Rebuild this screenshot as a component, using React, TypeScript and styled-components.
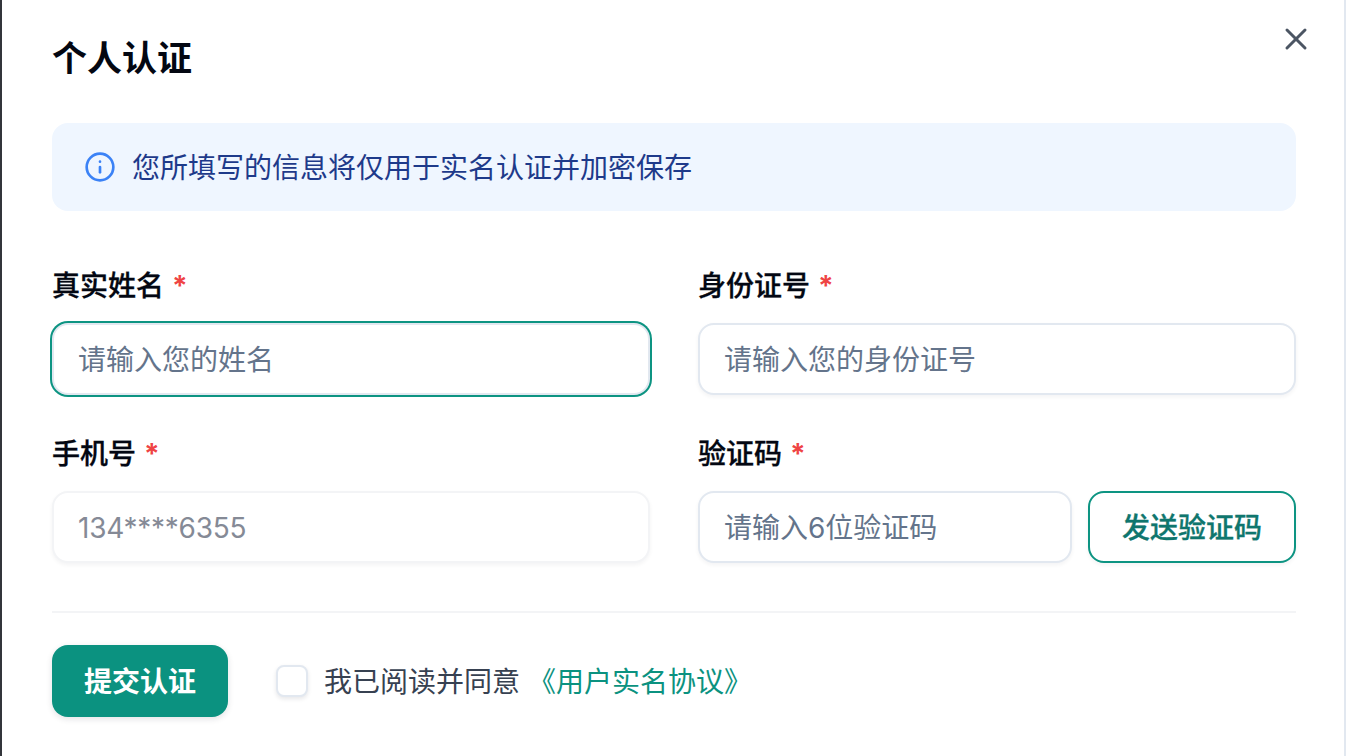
import React from "react";
import styled, { createGlobalStyle } from "styled-components";
import { X, Info } from "lucide-react";

const Global = createGlobalStyle`
  * { box-sizing: border-box; }
  html, body { margin: 0; padding: 0; height: 100%; overflow: hidden; background: #e2e8f0; }
  body { font-family: Inter, "Noto Sans CJK SC", sans-serif; }
`;

const Backdrop = styled.div`
  width: 1346px;
  height: 756px;
  padding-right: 2px;
  background: #e2e8f0;
  border-left: 2px solid #33353b;
`;

const Modal = styled.div`
  position: relative;
  width: 1342px;
  height: 756px;
  background: #ffffff;
  padding: 0 48px 0 50px;
  display: flex;
  flex-direction: column;
`;

const Title = styled.h1`
  margin: 35px 0 0;
  height: 46px;
  line-height: 46px;
  font-size: 35px;
  font-weight: 700;
  color: #030712;
`;

const Close = styled.button`
  position: absolute;
  top: 19px;
  right: 28px;
  width: 40px;
  height: 40px;
  padding: 0;
  border: none;
  background: none;
  color: #4b5563;
  display: flex;
  align-items: center;
  justify-content: center;
`;

const Notice = styled.div`
  margin-top: 42px;
  height: 88px;
  border-radius: 16px;
  background: #eff6ff;
  padding: 0 32px;
  display: flex;
  align-items: center;
  gap: 16px;
  font-size: 28px;
  color: #1e3a8a;
  svg { color: #3b82f6; flex: none; margin-top: -1px; }
`;

const NoticeText = styled.span`
  padding-bottom: 2px;
`;

const Form = styled.div`
  margin-top: 56px;
  display: grid;
  grid-template-columns: 598px 598px;
  column-gap: 48px;
  row-gap: 40px;
`;

const Field = styled.div`
  display: flex;
  flex-direction: column;
`;

const Label = styled.label`
  height: 36px;
  padding-top: 2px;
  line-height: 34px;
  margin-bottom: 20px;
  font-size: 28px;
  font-weight: 500;
  -webkit-text-stroke: 0.3px #030712;
  color: #030712;
  display: flex;
  gap: 8px;
`;

const Star = styled.span`
  color: #ef4444;
  font-weight: 700;
  -webkit-text-stroke: 0;
`;

const Input = styled.input<{ $focus?: boolean; $muted?: boolean }>`
  width: 100%;
  height: 72px;
  min-width: 0;
  padding: 2px 24px 0;
  font: 400 28px Inter, "Noto Sans CJK SC", sans-serif;
  letter-spacing: ${(p) => (p.$muted ? "-0.25px" : "0")};
  border-radius: 16px;
  outline: none;
  background: #fff;
  border: 2px solid ${(p) => (p.$muted ? "#f3f4f6" : "#e2e8f0")};
  box-shadow: ${(p) =>
    p.$focus ? "0 0 0 2px #0d9482" : "0 2px 4px rgba(15, 23, 42, 0.05)"};
  &::placeholder { color: ${(p) => (p.$muted ? "#858a96" : "#64748b")}; opacity: 1; }
`;

const CodeRow = styled.div`
  display: flex;
  gap: 16px;
`;

const SendButton = styled.button`
  flex: none;
  width: 208px;
  height: 72px;
  border-radius: 16px;
  border: 2px solid #0d9482;
  background: #fff;
  color: #0f766e;
  font: 500 28px Inter, "Noto Sans CJK SC", sans-serif;
  -webkit-text-stroke: 0.3px #0f766e;
  box-shadow: 0 2px 4px rgba(15, 23, 42, 0.05);
  padding: 0 0 3px;
`;

const Divider = styled.hr`
  margin: 48px 0 0;
  border: none;
  height: 2px;
  background: #f3f4f6;
`;

const Footer = styled.div`
  margin-top: 32px;
  display: flex;
  align-items: center;
`;

const Submit = styled.button`
  width: 176px;
  height: 72px;
  border: none;
  border-radius: 16px;
  background: #0b9280;
  color: #fff;
  font: 700 28px Inter, "Noto Sans CJK SC", sans-serif;
  box-shadow: 0 2px 6px rgba(15, 23, 42, 0.12);
  padding: 0 0 2px;
`;

const Agreement = styled.label`
  margin-left: 48px;
  display: flex;
  align-items: center;
  font-size: 28px;
  color: #374151;
`;

const Box = styled.span`
  width: 32px;
  height: 32px;
  margin-right: 16px;
  background: #fff;
  border: 2px solid #e2e8f0;
  border-radius: 8px;
  box-shadow: 0 2px 4px rgba(15, 23, 42, 0.1);
`;

const AgreementText = styled.span`
  padding-bottom: 2px;
`;

const Link = styled.a`
  color: #0b9280;
  margin-left: 8px;
`;

export default function App() {
  return (
    <Backdrop>
      <Global />
      <Modal>
        <Title>个人认证</Title>
        <Close aria-label="关闭"><X size={36} strokeWidth={2} /></Close>
        <Notice>
          <Info size={32} strokeWidth={2} />
          <NoticeText>您所填写的信息将仅用于实名认证并加密保存</NoticeText>
        </Notice>
        <Form>
          <Field>
            <Label>真实姓名<Star>*</Star></Label>
            <Input $focus placeholder="请输入您的姓名" />
          </Field>
          <Field>
            <Label>身份证号<Star>*</Star></Label>
            <Input placeholder="请输入您的身份证号" />
          </Field>
          <Field>
            <Label>手机号<Star>*</Star></Label>
            <Input $muted disabled placeholder="134****6355" />
          </Field>
          <Field>
            <Label>验证码<Star>*</Star></Label>
            <CodeRow>
              <Input placeholder="请输入6位验证码" />
              <SendButton>发送验证码</SendButton>
            </CodeRow>
          </Field>
        </Form>
        <Divider />
        <Footer>
          <Submit>提交认证</Submit>
          <Agreement>
            <Box />
            <AgreementText>
              我已阅读并同意
              <Link>《用户实名协议》</Link>
            </AgreementText>
          </Agreement>
        </Footer>
      </Modal>
    </Backdrop>
  );
}
